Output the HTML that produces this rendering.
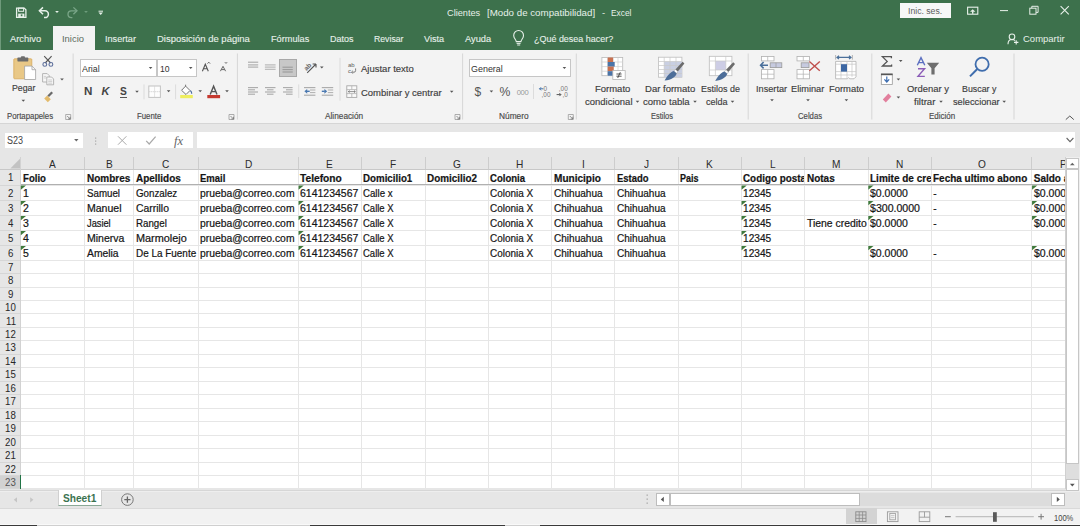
<!DOCTYPE html><html><head><meta charset="utf-8"><style>
*{margin:0;padding:0;box-sizing:border-box}
html,body{width:1080px;height:526px;overflow:hidden;background:#f3f3f3;font-family:"Liberation Sans",sans-serif;position:relative}
.p{position:absolute}
.t{position:absolute;white-space:nowrap;line-height:1}
svg{position:absolute;left:0;top:0;overflow:visible}
</style></head><body>
<div class="p" style="left:0px;top:0px;width:1080px;height:50px;background:#3d714c;"></div>
<div class="p" style="left:0px;top:0px;width:1px;height:50px;background:#6f9a7b;"></div>
<div class="t" style="left:447.40px;top:8.02px;font-size:9.9px;color:#e6f0e9;transform:scaleX(0.931);transform-origin:0 0;">Clientes</div>
<div class="t" style="left:487.20px;top:8.02px;font-size:9.9px;color:#e6f0e9;transform:scaleX(0.985);transform-origin:0 0;">[Modo de compatibilidad]</div>
<div class="t" style="left:602.00px;top:8.02px;font-size:9.4px;color:#e6f0e9;">-</div>
<div class="t" style="left:611.30px;top:8.02px;font-size:9.9px;color:#e6f0e9;transform:scaleX(0.843);transform-origin:0 0;">Excel</div>
<div class="t" style="left:10.00px;top:35.02px;font-size:9.2px;color:#e6f0e9;transform:scaleX(1.020);transform-origin:0 0;-webkit-text-stroke:0.12px #e6f0e9">Archivo</div>
<div class="t" style="left:105.30px;top:35.02px;font-size:9.2px;color:#e6f0e9;transform:scaleX(0.994);transform-origin:0 0;-webkit-text-stroke:0.12px #e6f0e9">Insertar</div>
<div class="t" style="left:157.00px;top:35.02px;font-size:9.2px;color:#e6f0e9;transform:scaleX(1.033);transform-origin:0 0;-webkit-text-stroke:0.12px #e6f0e9">Disposición de página</div>
<div class="t" style="left:270.50px;top:35.02px;font-size:9.2px;color:#e6f0e9;transform:scaleX(0.998);transform-origin:0 0;-webkit-text-stroke:0.12px #e6f0e9">Fórmulas</div>
<div class="t" style="left:329.50px;top:35.02px;font-size:9.2px;color:#e6f0e9;transform:scaleX(0.978);transform-origin:0 0;-webkit-text-stroke:0.12px #e6f0e9">Datos</div>
<div class="t" style="left:373.75px;top:35.02px;font-size:9.2px;color:#e6f0e9;transform:scaleX(0.946);transform-origin:0 0;-webkit-text-stroke:0.12px #e6f0e9">Revisar</div>
<div class="t" style="left:423.75px;top:35.02px;font-size:9.2px;color:#e6f0e9;transform:scaleX(0.986);transform-origin:0 0;-webkit-text-stroke:0.12px #e6f0e9">Vista</div>
<div class="t" style="left:464.50px;top:35.02px;font-size:9.2px;color:#e6f0e9;transform:scaleX(1.013);transform-origin:0 0;-webkit-text-stroke:0.12px #e6f0e9">Ayuda</div>
<div class="t" style="left:533.75px;top:35.02px;font-size:9.2px;color:#e6f0e9;transform:scaleX(0.975);transform-origin:0 0;-webkit-text-stroke:0.12px #e6f0e9">¿Qué desea hacer?</div>
<div class="p" style="left:53px;top:26px;width:42px;height:25px;background:#f3f3f3;"></div>
<div class="t" style="left:62.20px;top:35.02px;font-size:9.2px;color:#5b6b60;transform:scaleX(1.024);transform-origin:0 0;">Inicio</div>
<div class="p" style="left:899.5px;top:3px;width:51px;height:14.5px;background:#f7f7f7;"></div>
<div class="t" style="left:907.80px;top:7.02px;font-size:9.2px;color:#5c5c5c;transform:scaleX(0.942);transform-origin:0 0;">Inic. ses.</div>
<div class="t" style="left:1022.60px;top:35.02px;font-size:9.2px;color:#e6f0e9;transform:scaleX(1.033);transform-origin:0 0;">Compartir</div>
<div class="t" style="left:11.60px;top:83.02px;font-size:9.8px;color:#3c3c3c;transform:scaleX(0.895);transform-origin:0 0;-webkit-text-stroke:0.15px #3c3c3c">Pegar</div>
<div class="t" style="left:360.70px;top:64.02px;font-size:9.8px;color:#3c3c3c;transform:scaleX(0.969);transform-origin:0 0;-webkit-text-stroke:0.15px #3c3c3c">Ajustar texto</div>
<div class="t" style="left:360.70px;top:88.02px;font-size:9.8px;color:#3c3c3c;transform:scaleX(0.967);transform-origin:0 0;-webkit-text-stroke:0.15px #3c3c3c">Combinar y centrar</div>
<div class="t" style="left:594.70px;top:84.02px;font-size:9.8px;color:#3c3c3c;transform:scaleX(0.968);transform-origin:0 0;-webkit-text-stroke:0.15px #3c3c3c">Formato</div>
<div class="t" style="left:585.00px;top:97.02px;font-size:9.8px;color:#3c3c3c;transform:scaleX(0.969);transform-origin:0 0;-webkit-text-stroke:0.15px #3c3c3c">condicional</div>
<div class="t" style="left:645.00px;top:84.02px;font-size:9.8px;color:#3c3c3c;transform:scaleX(0.972);transform-origin:0 0;-webkit-text-stroke:0.15px #3c3c3c">Dar formato</div>
<div class="t" style="left:643.30px;top:97.02px;font-size:9.8px;color:#3c3c3c;transform:scaleX(0.974);transform-origin:0 0;-webkit-text-stroke:0.15px #3c3c3c">como tabla</div>
<div class="t" style="left:700.80px;top:84.02px;font-size:9.8px;color:#3c3c3c;transform:scaleX(0.916);transform-origin:0 0;-webkit-text-stroke:0.15px #3c3c3c">Estilos de</div>
<div class="t" style="left:706.30px;top:97.02px;font-size:9.8px;color:#3c3c3c;transform:scaleX(0.922);transform-origin:0 0;-webkit-text-stroke:0.15px #3c3c3c">celda</div>
<div class="t" style="left:756.40px;top:84.02px;font-size:9.8px;color:#3c3c3c;transform:scaleX(0.936);transform-origin:0 0;-webkit-text-stroke:0.15px #3c3c3c">Insertar</div>
<div class="t" style="left:791.40px;top:84.02px;font-size:9.8px;color:#3c3c3c;transform:scaleX(0.941);transform-origin:0 0;-webkit-text-stroke:0.15px #3c3c3c">Eliminar</div>
<div class="t" style="left:828.60px;top:84.02px;font-size:9.8px;color:#3c3c3c;transform:scaleX(0.959);transform-origin:0 0;-webkit-text-stroke:0.15px #3c3c3c">Formato</div>
<div class="t" style="left:907.40px;top:84.02px;font-size:9.8px;color:#3c3c3c;transform:scaleX(0.964);transform-origin:0 0;-webkit-text-stroke:0.15px #3c3c3c">Ordenar y</div>
<div class="t" style="left:913.80px;top:97.02px;font-size:9.8px;color:#3c3c3c;transform:scaleX(0.983);transform-origin:0 0;-webkit-text-stroke:0.15px #3c3c3c">filtrar</div>
<div class="t" style="left:962.40px;top:84.02px;font-size:9.8px;color:#3c3c3c;transform:scaleX(0.902);transform-origin:0 0;-webkit-text-stroke:0.15px #3c3c3c">Buscar y</div>
<div class="t" style="left:952.70px;top:97.02px;font-size:9.8px;color:#3c3c3c;transform:scaleX(0.942);transform-origin:0 0;-webkit-text-stroke:0.15px #3c3c3c">seleccionar</div>
<div class="t" style="left:6.90px;top:113.02px;font-size:8.2px;color:#4a4a4a;transform:scaleX(0.956);transform-origin:0 0;-webkit-text-stroke:0.15px #4a4a4a">Portapapeles</div>
<div class="t" style="left:137.00px;top:113.02px;font-size:8.2px;color:#4a4a4a;transform:scaleX(0.952);transform-origin:0 0;-webkit-text-stroke:0.15px #4a4a4a">Fuente</div>
<div class="t" style="left:324.80px;top:113.02px;font-size:8.2px;color:#4a4a4a;transform:scaleX(1.010);transform-origin:0 0;-webkit-text-stroke:0.15px #4a4a4a">Alineación</div>
<div class="t" style="left:498.50px;top:113.02px;font-size:8.2px;color:#4a4a4a;transform:scaleX(1.018);transform-origin:0 0;-webkit-text-stroke:0.15px #4a4a4a">Número</div>
<div class="t" style="left:651.30px;top:113.02px;font-size:8.2px;color:#4a4a4a;transform:scaleX(0.911);transform-origin:0 0;-webkit-text-stroke:0.15px #4a4a4a">Estilos</div>
<div class="t" style="left:797.60px;top:113.02px;font-size:8.2px;color:#4a4a4a;transform:scaleX(0.944);transform-origin:0 0;-webkit-text-stroke:0.15px #4a4a4a">Celdas</div>
<div class="t" style="left:929.30px;top:113.02px;font-size:8.2px;color:#4a4a4a;transform:scaleX(0.978);transform-origin:0 0;-webkit-text-stroke:0.15px #4a4a4a">Edición</div>
<div class="p" style="left:80.3px;top:59.3px;width:76.5px;height:17.5px;background:#fff;border:1px solid #c6c6c6"></div>
<div class="p" style="left:157px;top:59.3px;width:39.5px;height:17.5px;background:#fff;border:1px solid #c6c6c6"></div>
<div class="t" style="left:82.30px;top:65.02px;font-size:9px;color:#333;transform:scaleX(0.983);transform-origin:0 0;">Arial</div>
<div class="t" style="left:159.70px;top:65.02px;font-size:9px;color:#333;transform:scaleX(0.959);transform-origin:0 0;">10</div>
<div class="p" style="left:469.3px;top:58.8px;width:101.3px;height:18px;background:#fff;border:1px solid #c6c6c6"></div>
<div class="t" style="left:471.40px;top:65.02px;font-size:9px;color:#333;transform:scaleX(0.993);transform-origin:0 0;">General</div>
<div class="p" style="left:279px;top:58.8px;width:17.6px;height:18px;background:#c8c8c8;border:1px solid #a8a8a8"></div>
<div class="t" style="left:84.00px;top:86.02px;font-size:11px;color:#444;font-weight:bold;transform:scaleX(1.057);transform-origin:0 0;">N</div>
<div class="t" style="left:101.4px;top:86.1px;font-size:11px;color:#444;font-weight:bold;font-style:italic">K</div>
<div class="t" style="left:119.90px;top:86.02px;font-size:11px;color:#444;font-weight:bold;transform:scaleX(0.927);transform-origin:0 0;">S</div>
<div class="p" style="left:120px;top:96.6px;width:6.6px;height:0.9px;background:#555;"></div>
<div class="p" style="left:0px;top:123px;width:1080px;height:1px;background:#d5d5d5;"></div>
<div class="p" style="left:0px;top:124px;width:1080px;height:33px;background:#e6e6e6;"></div>
<div class="p" style="left:4.8px;top:132.5px;width:78.2px;height:15.5px;background:#fff;"></div>
<div class="t" style="left:7.00px;top:136.02px;font-size:10px;color:#444;transform:scaleX(0.899);transform-origin:0 0;">S23</div>
<div class="p" style="left:107.7px;top:132.3px;width:85.3px;height:15.6px;background:#fff;"></div>
<div class="p" style="left:196.6px;top:132.2px;width:878.6px;height:15.6px;background:#fff;"></div>
<div class="p" style="left:0px;top:157px;width:1066px;height:12.5px;background:#e6e6e6;"></div>
<div class="p" style="left:0px;top:169.5px;width:20.5px;height:320px;background:#e6e6e6;"></div>
<div class="p" style="left:20.5px;top:169.5px;width:1045.5px;height:319.5px;background:#fff;"></div>
<div class="p" style="left:20.5px;top:184.5px;width:1045.5px;height:1px;background:#e6e6e6;"></div>
<div class="p" style="left:0px;top:184.5px;width:20.5px;height:1px;background:#d6d6d6;"></div>
<div class="p" style="left:20.5px;top:200px;width:1045.5px;height:1px;background:#e6e6e6;"></div>
<div class="p" style="left:0px;top:200px;width:20.5px;height:1px;background:#d6d6d6;"></div>
<div class="p" style="left:20.5px;top:215px;width:1045.5px;height:1px;background:#e6e6e6;"></div>
<div class="p" style="left:0px;top:215px;width:20.5px;height:1px;background:#d6d6d6;"></div>
<div class="p" style="left:20.5px;top:230px;width:1045.5px;height:1px;background:#e6e6e6;"></div>
<div class="p" style="left:0px;top:230px;width:20.5px;height:1px;background:#d6d6d6;"></div>
<div class="p" style="left:20.5px;top:245px;width:1045.5px;height:1px;background:#e6e6e6;"></div>
<div class="p" style="left:0px;top:245px;width:20.5px;height:1px;background:#d6d6d6;"></div>
<div class="p" style="left:20.5px;top:259.6px;width:1045.5px;height:1px;background:#e6e6e6;"></div>
<div class="p" style="left:0px;top:259.6px;width:20.5px;height:1px;background:#d6d6d6;"></div>
<div class="p" style="left:20.5px;top:273.06px;width:1045.5px;height:1px;background:#e6e6e6;"></div>
<div class="p" style="left:0px;top:273.06px;width:20.5px;height:1px;background:#d6d6d6;"></div>
<div class="p" style="left:20.5px;top:286.52px;width:1045.5px;height:1px;background:#e6e6e6;"></div>
<div class="p" style="left:0px;top:286.52px;width:20.5px;height:1px;background:#d6d6d6;"></div>
<div class="p" style="left:20.5px;top:299.98px;width:1045.5px;height:1px;background:#e6e6e6;"></div>
<div class="p" style="left:0px;top:299.98px;width:20.5px;height:1px;background:#d6d6d6;"></div>
<div class="p" style="left:20.5px;top:313.44px;width:1045.5px;height:1px;background:#e6e6e6;"></div>
<div class="p" style="left:0px;top:313.44px;width:20.5px;height:1px;background:#d6d6d6;"></div>
<div class="p" style="left:20.5px;top:326.9px;width:1045.5px;height:1px;background:#e6e6e6;"></div>
<div class="p" style="left:0px;top:326.9px;width:20.5px;height:1px;background:#d6d6d6;"></div>
<div class="p" style="left:20.5px;top:340.36px;width:1045.5px;height:1px;background:#e6e6e6;"></div>
<div class="p" style="left:0px;top:340.36px;width:20.5px;height:1px;background:#d6d6d6;"></div>
<div class="p" style="left:20.5px;top:353.82px;width:1045.5px;height:1px;background:#e6e6e6;"></div>
<div class="p" style="left:0px;top:353.82px;width:20.5px;height:1px;background:#d6d6d6;"></div>
<div class="p" style="left:20.5px;top:367.28px;width:1045.5px;height:1px;background:#e6e6e6;"></div>
<div class="p" style="left:0px;top:367.28px;width:20.5px;height:1px;background:#d6d6d6;"></div>
<div class="p" style="left:20.5px;top:380.74px;width:1045.5px;height:1px;background:#e6e6e6;"></div>
<div class="p" style="left:0px;top:380.74px;width:20.5px;height:1px;background:#d6d6d6;"></div>
<div class="p" style="left:20.5px;top:394.2px;width:1045.5px;height:1px;background:#e6e6e6;"></div>
<div class="p" style="left:0px;top:394.2px;width:20.5px;height:1px;background:#d6d6d6;"></div>
<div class="p" style="left:20.5px;top:407.66px;width:1045.5px;height:1px;background:#e6e6e6;"></div>
<div class="p" style="left:0px;top:407.66px;width:20.5px;height:1px;background:#d6d6d6;"></div>
<div class="p" style="left:20.5px;top:421.12px;width:1045.5px;height:1px;background:#e6e6e6;"></div>
<div class="p" style="left:0px;top:421.12px;width:20.5px;height:1px;background:#d6d6d6;"></div>
<div class="p" style="left:20.5px;top:434.58px;width:1045.5px;height:1px;background:#e6e6e6;"></div>
<div class="p" style="left:0px;top:434.58px;width:20.5px;height:1px;background:#d6d6d6;"></div>
<div class="p" style="left:20.5px;top:448.04px;width:1045.5px;height:1px;background:#e6e6e6;"></div>
<div class="p" style="left:0px;top:448.04px;width:20.5px;height:1px;background:#d6d6d6;"></div>
<div class="p" style="left:20.5px;top:461.5px;width:1045.5px;height:1px;background:#e6e6e6;"></div>
<div class="p" style="left:0px;top:461.5px;width:20.5px;height:1px;background:#d6d6d6;"></div>
<div class="p" style="left:20.5px;top:474.96px;width:1045.5px;height:1px;background:#e6e6e6;"></div>
<div class="p" style="left:0px;top:474.96px;width:20.5px;height:1px;background:#d6d6d6;"></div>
<div class="p" style="left:20.5px;top:488.42px;width:1045.5px;height:1px;background:#e6e6e6;"></div>
<div class="p" style="left:0px;top:488.42px;width:20.5px;height:1px;background:#d6d6d6;"></div>
<div class="p" style="left:20.0px;top:157px;width:1px;height:332px;background:#e6e6e6;"></div>
<div class="p" style="left:84.0px;top:157px;width:1px;height:332px;background:#e6e6e6;"></div>
<div class="p" style="left:133.25px;top:157px;width:1px;height:332px;background:#e6e6e6;"></div>
<div class="p" style="left:197.75px;top:157px;width:1px;height:332px;background:#e6e6e6;"></div>
<div class="p" style="left:297.75px;top:157px;width:1px;height:332px;background:#e6e6e6;"></div>
<div class="p" style="left:360.75px;top:157px;width:1px;height:332px;background:#e6e6e6;"></div>
<div class="p" style="left:424.5px;top:157px;width:1px;height:332px;background:#e6e6e6;"></div>
<div class="p" style="left:487.75px;top:157px;width:1px;height:332px;background:#e6e6e6;"></div>
<div class="p" style="left:551.25px;top:157px;width:1px;height:332px;background:#e6e6e6;"></div>
<div class="p" style="left:614.0px;top:157px;width:1px;height:332px;background:#e6e6e6;"></div>
<div class="p" style="left:677.5px;top:157px;width:1px;height:332px;background:#e6e6e6;"></div>
<div class="p" style="left:740.75px;top:157px;width:1px;height:332px;background:#e6e6e6;"></div>
<div class="p" style="left:804.0px;top:157px;width:1px;height:332px;background:#e6e6e6;"></div>
<div class="p" style="left:867.5px;top:157px;width:1px;height:332px;background:#e6e6e6;"></div>
<div class="p" style="left:930.75px;top:157px;width:1px;height:332px;background:#e6e6e6;"></div>
<div class="p" style="left:1031.25px;top:157px;width:1px;height:332px;background:#e6e6e6;"></div>
<div class="p" style="left:84.0px;top:157px;width:1px;height:12.5px;background:#cdcdcd;"></div>
<div class="p" style="left:133.25px;top:157px;width:1px;height:12.5px;background:#cdcdcd;"></div>
<div class="p" style="left:197.75px;top:157px;width:1px;height:12.5px;background:#cdcdcd;"></div>
<div class="p" style="left:297.75px;top:157px;width:1px;height:12.5px;background:#cdcdcd;"></div>
<div class="p" style="left:360.75px;top:157px;width:1px;height:12.5px;background:#cdcdcd;"></div>
<div class="p" style="left:424.5px;top:157px;width:1px;height:12.5px;background:#cdcdcd;"></div>
<div class="p" style="left:487.75px;top:157px;width:1px;height:12.5px;background:#cdcdcd;"></div>
<div class="p" style="left:551.25px;top:157px;width:1px;height:12.5px;background:#cdcdcd;"></div>
<div class="p" style="left:614.0px;top:157px;width:1px;height:12.5px;background:#cdcdcd;"></div>
<div class="p" style="left:677.5px;top:157px;width:1px;height:12.5px;background:#cdcdcd;"></div>
<div class="p" style="left:740.75px;top:157px;width:1px;height:12.5px;background:#cdcdcd;"></div>
<div class="p" style="left:804.0px;top:157px;width:1px;height:12.5px;background:#cdcdcd;"></div>
<div class="p" style="left:867.5px;top:157px;width:1px;height:12.5px;background:#cdcdcd;"></div>
<div class="p" style="left:930.75px;top:157px;width:1px;height:12.5px;background:#cdcdcd;"></div>
<div class="p" style="left:1031.25px;top:157px;width:1px;height:12.5px;background:#cdcdcd;"></div>
<div class="p" style="left:0px;top:169px;width:1066px;height:1px;background:#c8c8c8;"></div>
<div class="p" style="left:20px;top:157px;width:1px;height:332px;background:#d2d2d2;"></div>
<div class="p" style="left:20.5px;top:184px;width:1045.5px;height:1.2px;background:#b0b0b0;"></div>
<div class="p" style="left:0px;top:475.96000000000004px;width:20px;height:12.460000000000036px;background:#d2d2d2;"></div>
<div class="p" style="left:19.6px;top:475.46000000000004px;width:1.6px;height:13.460000000000036px;background:#217346;"></div>
<div class="t" style="left:49.12px;top:159.02px;font-size:11px;color:#2b2b2b;transform:scaleX(0.920);transform-origin:0 0;">A</div>
<div class="t" style="left:105.75px;top:159.02px;font-size:11px;color:#2b2b2b;transform:scaleX(0.920);transform-origin:0 0;">B</div>
<div class="t" style="left:162.35px;top:159.02px;font-size:11px;color:#2b2b2b;transform:scaleX(0.920);transform-origin:0 0;">C</div>
<div class="t" style="left:244.60px;top:159.02px;font-size:11px;color:#2b2b2b;transform:scaleX(0.920);transform-origin:0 0;">D</div>
<div class="t" style="left:326.37px;top:159.02px;font-size:11px;color:#2b2b2b;transform:scaleX(0.920);transform-origin:0 0;">E</div>
<div class="t" style="left:390.03px;top:159.02px;font-size:11px;color:#2b2b2b;transform:scaleX(0.920);transform-origin:0 0;">F</div>
<div class="t" style="left:452.69px;top:159.02px;font-size:11px;color:#2b2b2b;transform:scaleX(0.920);transform-origin:0 0;">G</div>
<div class="t" style="left:516.35px;top:159.02px;font-size:11px;color:#2b2b2b;transform:scaleX(0.920);transform-origin:0 0;">H</div>
<div class="t" style="left:581.72px;top:159.02px;font-size:11px;color:#2b2b2b;transform:scaleX(0.920);transform-origin:0 0;">I</div>
<div class="t" style="left:643.72px;top:159.02px;font-size:11px;color:#2b2b2b;transform:scaleX(0.920);transform-origin:0 0;">J</div>
<div class="t" style="left:706.25px;top:159.02px;font-size:11px;color:#2b2b2b;transform:scaleX(0.920);transform-origin:0 0;">K</div>
<div class="t" style="left:770.06px;top:159.02px;font-size:11px;color:#2b2b2b;transform:scaleX(0.920);transform-origin:0 0;">L</div>
<div class="t" style="left:832.04px;top:159.02px;font-size:11px;color:#2b2b2b;transform:scaleX(0.920);transform-origin:0 0;">M</div>
<div class="t" style="left:895.97px;top:159.02px;font-size:11px;color:#2b2b2b;transform:scaleX(0.920);transform-origin:0 0;">N</div>
<div class="t" style="left:977.56px;top:159.02px;font-size:11px;color:#2b2b2b;transform:scaleX(0.920);transform-origin:0 0;">O</div>
<div class="t" style="left:1060.00px;top:159.02px;font-size:11px;color:#2b2b2b;transform:scaleX(0.920);transform-origin:0 0;">P</div>
<div class="t" style="left:8.11px;top:172.02px;font-size:11px;color:#262626;transform:scaleX(0.880);transform-origin:0 0;">1</div>
<div class="t" style="left:8.11px;top:188.02px;font-size:11px;color:#262626;transform:scaleX(0.880);transform-origin:0 0;">2</div>
<div class="t" style="left:8.11px;top:203.02px;font-size:11px;color:#262626;transform:scaleX(0.880);transform-origin:0 0;">3</div>
<div class="t" style="left:8.11px;top:218.02px;font-size:11px;color:#262626;transform:scaleX(0.880);transform-origin:0 0;">4</div>
<div class="t" style="left:8.11px;top:233.02px;font-size:11px;color:#262626;transform:scaleX(0.880);transform-origin:0 0;">5</div>
<div class="t" style="left:8.11px;top:248.02px;font-size:11px;color:#262626;transform:scaleX(0.880);transform-origin:0 0;">6</div>
<div class="t" style="left:8.11px;top:262.02px;font-size:11px;color:#262626;transform:scaleX(0.880);transform-origin:0 0;">7</div>
<div class="t" style="left:8.11px;top:275.02px;font-size:11px;color:#262626;transform:scaleX(0.880);transform-origin:0 0;">8</div>
<div class="t" style="left:8.11px;top:289.02px;font-size:11px;color:#262626;transform:scaleX(0.880);transform-origin:0 0;">9</div>
<div class="t" style="left:5.42px;top:302.02px;font-size:11px;color:#262626;transform:scaleX(0.880);transform-origin:0 0;">10</div>
<div class="t" style="left:5.78px;top:316.02px;font-size:11px;color:#262626;transform:scaleX(0.880);transform-origin:0 0;">11</div>
<div class="t" style="left:5.42px;top:329.02px;font-size:11px;color:#262626;transform:scaleX(0.880);transform-origin:0 0;">12</div>
<div class="t" style="left:5.42px;top:342.02px;font-size:11px;color:#262626;transform:scaleX(0.880);transform-origin:0 0;">13</div>
<div class="t" style="left:5.42px;top:356.02px;font-size:11px;color:#262626;transform:scaleX(0.880);transform-origin:0 0;">14</div>
<div class="t" style="left:5.42px;top:369.02px;font-size:11px;color:#262626;transform:scaleX(0.880);transform-origin:0 0;">15</div>
<div class="t" style="left:5.42px;top:383.02px;font-size:11px;color:#262626;transform:scaleX(0.880);transform-origin:0 0;">16</div>
<div class="t" style="left:5.42px;top:396.02px;font-size:11px;color:#262626;transform:scaleX(0.880);transform-origin:0 0;">17</div>
<div class="t" style="left:5.42px;top:410.02px;font-size:11px;color:#262626;transform:scaleX(0.880);transform-origin:0 0;">18</div>
<div class="t" style="left:5.42px;top:423.02px;font-size:11px;color:#262626;transform:scaleX(0.880);transform-origin:0 0;">19</div>
<div class="t" style="left:5.42px;top:437.02px;font-size:11px;color:#262626;transform:scaleX(0.880);transform-origin:0 0;">20</div>
<div class="t" style="left:5.42px;top:450.02px;font-size:11px;color:#262626;transform:scaleX(0.880);transform-origin:0 0;">21</div>
<div class="t" style="left:5.42px;top:464.02px;font-size:11px;color:#262626;transform:scaleX(0.880);transform-origin:0 0;">22</div>
<div class="t" style="left:5.42px;top:477.02px;font-size:11px;color:#555;transform:scaleX(0.880);transform-origin:0 0;">23</div>
<div class="p" style="left:21.00px;top:169.50px;width:63.00px;height:15px;overflow:hidden"><div class="t" style="left:1.5px;top:4.52px;font-size:10px;color:#151515;font-weight:bold;transform:scaleX(0.962);transform-origin:0 0;-webkit-text-stroke:0.2px #151515">Folio</div></div>
<div class="p" style="left:85.00px;top:169.50px;width:48.25px;height:15px;overflow:hidden"><div class="t" style="left:1.5px;top:4.52px;font-size:10px;color:#151515;font-weight:bold;transform:scaleX(0.998);transform-origin:0 0;-webkit-text-stroke:0.2px #151515">Nombres</div></div>
<div class="p" style="left:134.25px;top:169.50px;width:63.50px;height:15px;overflow:hidden"><div class="t" style="left:1.5px;top:4.52px;font-size:10px;color:#151515;font-weight:bold;transform:scaleX(0.996);transform-origin:0 0;-webkit-text-stroke:0.2px #151515">Apellidos</div></div>
<div class="p" style="left:198.75px;top:169.50px;width:99.00px;height:15px;overflow:hidden"><div class="t" style="left:1.5px;top:4.52px;font-size:10px;color:#151515;font-weight:bold;transform:scaleX(0.951);transform-origin:0 0;-webkit-text-stroke:0.2px #151515">Email</div></div>
<div class="p" style="left:298.75px;top:169.50px;width:62.00px;height:15px;overflow:hidden"><div class="t" style="left:1.5px;top:4.52px;font-size:10px;color:#151515;font-weight:bold;transform:scaleX(1.02);transform-origin:0 0;-webkit-text-stroke:0.2px #151515">Telefono</div></div>
<div class="p" style="left:361.75px;top:169.50px;width:62.75px;height:15px;overflow:hidden"><div class="t" style="left:1.5px;top:4.52px;font-size:10px;color:#151515;font-weight:bold;transform:scaleX(0.974);transform-origin:0 0;-webkit-text-stroke:0.2px #151515">Domicilio1</div></div>
<div class="p" style="left:425.50px;top:169.50px;width:62.25px;height:15px;overflow:hidden"><div class="t" style="left:1.5px;top:4.52px;font-size:10px;color:#151515;font-weight:bold;transform:scaleX(0.988);transform-origin:0 0;-webkit-text-stroke:0.2px #151515">Domicilio2</div></div>
<div class="p" style="left:488.75px;top:169.50px;width:62.50px;height:15px;overflow:hidden"><div class="t" style="left:1.5px;top:4.52px;font-size:10px;color:#151515;font-weight:bold;transform:scaleX(0.957);transform-origin:0 0;-webkit-text-stroke:0.2px #151515">Colonia</div></div>
<div class="p" style="left:552.25px;top:169.50px;width:61.75px;height:15px;overflow:hidden"><div class="t" style="left:1.5px;top:4.52px;font-size:10px;color:#151515;font-weight:bold;transform:scaleX(1.006);transform-origin:0 0;-webkit-text-stroke:0.2px #151515">Municipio</div></div>
<div class="p" style="left:615.00px;top:169.50px;width:62.50px;height:15px;overflow:hidden"><div class="t" style="left:1.5px;top:4.52px;font-size:10px;color:#151515;font-weight:bold;transform:scaleX(0.946);transform-origin:0 0;-webkit-text-stroke:0.2px #151515">Estado</div></div>
<div class="p" style="left:678.50px;top:169.50px;width:62.25px;height:15px;overflow:hidden"><div class="t" style="left:1.5px;top:4.52px;font-size:10px;color:#151515;font-weight:bold;transform:scaleX(0.898);transform-origin:0 0;-webkit-text-stroke:0.2px #151515">Pais</div></div>
<div class="p" style="left:741.75px;top:169.50px;width:62.25px;height:15px;overflow:hidden"><div class="t" style="left:1.5px;top:4.52px;font-size:10px;color:#151515;font-weight:bold;transform:scaleX(0.985);transform-origin:0 0;-webkit-text-stroke:0.2px #151515">Codigo postal</div></div>
<div class="p" style="left:805.00px;top:169.50px;width:62.50px;height:15px;overflow:hidden"><div class="t" style="left:1.5px;top:4.52px;font-size:10px;color:#151515;font-weight:bold;transform:scaleX(0.996);transform-origin:0 0;-webkit-text-stroke:0.2px #151515">Notas</div></div>
<div class="p" style="left:868.50px;top:169.50px;width:62.25px;height:15px;overflow:hidden"><div class="t" style="left:1.5px;top:4.52px;font-size:10px;color:#151515;font-weight:bold;transform:scaleX(1.0);transform-origin:0 0;-webkit-text-stroke:0.2px #151515">Limite de credito</div></div>
<div class="p" style="left:931.75px;top:169.50px;width:99.50px;height:15px;overflow:hidden"><div class="t" style="left:1.5px;top:4.52px;font-size:10px;color:#151515;font-weight:bold;transform:scaleX(0.998);transform-origin:0 0;-webkit-text-stroke:0.2px #151515">Fecha ultimo abono</div></div>
<div class="p" style="left:1032.25px;top:169.50px;width:32.25px;height:15px;overflow:hidden"><div class="t" style="left:1.5px;top:4.52px;font-size:10px;color:#151515;font-weight:bold;transform:scaleX(1.0);transform-origin:0 0;-webkit-text-stroke:0.2px #151515">Saldo actual</div></div>
<div class="p" style="left:21.00px;top:184.50px;width:63.00px;height:15px;overflow:hidden"><div class="t" style="left:1.5px;top:4.52px;font-size:10px;color:#151515;transform:scaleX(1.05);transform-origin:0 0;-webkit-text-stroke:0.2px #151515">1</div></div>
<div class="p" style="left:85.00px;top:184.50px;width:48.25px;height:15px;overflow:hidden"><div class="t" style="left:1.5px;top:4.52px;font-size:10px;color:#151515;transform:scaleX(0.973);transform-origin:0 0;-webkit-text-stroke:0.2px #151515">Samuel</div></div>
<div class="p" style="left:134.25px;top:184.50px;width:63.50px;height:15px;overflow:hidden"><div class="t" style="left:1.5px;top:4.52px;font-size:10px;color:#151515;transform:scaleX(0.976);transform-origin:0 0;-webkit-text-stroke:0.2px #151515">Gonzalez</div></div>
<div class="p" style="left:198.75px;top:184.50px;width:99.00px;height:15px;overflow:hidden"><div class="t" style="left:1.5px;top:4.52px;font-size:10px;color:#151515;transform:scaleX(1.035);transform-origin:0 0;-webkit-text-stroke:0.2px #151515">prueba@correo.com</div></div>
<div class="p" style="left:298.75px;top:184.50px;width:62.00px;height:15px;overflow:hidden"><div class="t" style="left:1.5px;top:4.52px;font-size:10px;color:#151515;transform:scaleX(1.049);transform-origin:0 0;-webkit-text-stroke:0.2px #151515">6141234567</div></div>
<div class="p" style="left:361.75px;top:184.50px;width:62.75px;height:15px;overflow:hidden"><div class="t" style="left:1.5px;top:4.52px;font-size:10px;color:#151515;transform:scaleX(0.967);transform-origin:0 0;-webkit-text-stroke:0.2px #151515">Calle x</div></div>
<div class="p" style="left:488.75px;top:184.50px;width:62.50px;height:15px;overflow:hidden"><div class="t" style="left:1.5px;top:4.52px;font-size:10px;color:#151515;transform:scaleX(0.995);transform-origin:0 0;-webkit-text-stroke:0.2px #151515">Colonia X</div></div>
<div class="p" style="left:552.25px;top:184.50px;width:61.75px;height:15px;overflow:hidden"><div class="t" style="left:1.5px;top:4.52px;font-size:10px;color:#151515;transform:scaleX(1.004);transform-origin:0 0;-webkit-text-stroke:0.2px #151515">Chihuahua</div></div>
<div class="p" style="left:615.00px;top:184.50px;width:62.50px;height:15px;overflow:hidden"><div class="t" style="left:1.5px;top:4.52px;font-size:10px;color:#151515;transform:scaleX(1.004);transform-origin:0 0;-webkit-text-stroke:0.2px #151515">Chihuahua</div></div>
<div class="p" style="left:741.75px;top:184.50px;width:62.25px;height:15px;overflow:hidden"><div class="t" style="left:1.5px;top:4.52px;font-size:10px;color:#151515;transform:scaleX(1.014);transform-origin:0 0;-webkit-text-stroke:0.2px #151515">12345</div></div>
<div class="p" style="left:868.50px;top:184.50px;width:62.25px;height:15px;overflow:hidden"><div class="t" style="left:1.5px;top:4.52px;font-size:10px;color:#151515;transform:scaleX(1.047);transform-origin:0 0;-webkit-text-stroke:0.2px #151515">$0.0000</div></div>
<div class="p" style="left:931.75px;top:184.50px;width:99.50px;height:15px;overflow:hidden"><div class="t" style="left:1.5px;top:4.52px;font-size:10px;color:#151515;transform:scaleX(1.0);transform-origin:0 0;-webkit-text-stroke:0.2px #151515">-</div></div>
<div class="p" style="left:1032.25px;top:184.50px;width:32.25px;height:15px;overflow:hidden"><div class="t" style="left:1.5px;top:4.52px;font-size:10px;color:#151515;transform:scaleX(1.047);transform-origin:0 0;-webkit-text-stroke:0.2px #151515">$0.0000</div></div>
<div class="p" style="left:21.00px;top:200.00px;width:63.00px;height:15px;overflow:hidden"><div class="t" style="left:1.5px;top:4.02px;font-size:10px;color:#151515;transform:scaleX(1.05);transform-origin:0 0;-webkit-text-stroke:0.2px #151515">2</div></div>
<div class="p" style="left:85.00px;top:200.00px;width:48.25px;height:15px;overflow:hidden"><div class="t" style="left:1.5px;top:4.02px;font-size:10px;color:#151515;transform:scaleX(1.052);transform-origin:0 0;-webkit-text-stroke:0.2px #151515">Manuel</div></div>
<div class="p" style="left:134.25px;top:200.00px;width:63.50px;height:15px;overflow:hidden"><div class="t" style="left:1.5px;top:4.02px;font-size:10px;color:#151515;transform:scaleX(1.041);transform-origin:0 0;-webkit-text-stroke:0.2px #151515">Carrillo</div></div>
<div class="p" style="left:198.75px;top:200.00px;width:99.00px;height:15px;overflow:hidden"><div class="t" style="left:1.5px;top:4.02px;font-size:10px;color:#151515;transform:scaleX(1.035);transform-origin:0 0;-webkit-text-stroke:0.2px #151515">prueba@correo.com</div></div>
<div class="p" style="left:298.75px;top:200.00px;width:62.00px;height:15px;overflow:hidden"><div class="t" style="left:1.5px;top:4.02px;font-size:10px;color:#151515;transform:scaleX(1.049);transform-origin:0 0;-webkit-text-stroke:0.2px #151515">6141234567</div></div>
<div class="p" style="left:361.75px;top:200.00px;width:62.75px;height:15px;overflow:hidden"><div class="t" style="left:1.5px;top:4.02px;font-size:10px;color:#151515;transform:scaleX(0.95);transform-origin:0 0;-webkit-text-stroke:0.2px #151515">Calle X</div></div>
<div class="p" style="left:488.75px;top:200.00px;width:62.50px;height:15px;overflow:hidden"><div class="t" style="left:1.5px;top:4.02px;font-size:10px;color:#151515;transform:scaleX(0.995);transform-origin:0 0;-webkit-text-stroke:0.2px #151515">Colonia X</div></div>
<div class="p" style="left:552.25px;top:200.00px;width:61.75px;height:15px;overflow:hidden"><div class="t" style="left:1.5px;top:4.02px;font-size:10px;color:#151515;transform:scaleX(1.004);transform-origin:0 0;-webkit-text-stroke:0.2px #151515">Chihuahua</div></div>
<div class="p" style="left:615.00px;top:200.00px;width:62.50px;height:15px;overflow:hidden"><div class="t" style="left:1.5px;top:4.02px;font-size:10px;color:#151515;transform:scaleX(1.004);transform-origin:0 0;-webkit-text-stroke:0.2px #151515">Chihuahua</div></div>
<div class="p" style="left:741.75px;top:200.00px;width:62.25px;height:15px;overflow:hidden"><div class="t" style="left:1.5px;top:4.02px;font-size:10px;color:#151515;transform:scaleX(1.014);transform-origin:0 0;-webkit-text-stroke:0.2px #151515">12345</div></div>
<div class="p" style="left:868.50px;top:200.00px;width:62.25px;height:15px;overflow:hidden"><div class="t" style="left:1.5px;top:4.02px;font-size:10px;color:#151515;transform:scaleX(1.057);transform-origin:0 0;-webkit-text-stroke:0.2px #151515">$300.0000</div></div>
<div class="p" style="left:931.75px;top:200.00px;width:99.50px;height:15px;overflow:hidden"><div class="t" style="left:1.5px;top:4.02px;font-size:10px;color:#151515;transform:scaleX(1.0);transform-origin:0 0;-webkit-text-stroke:0.2px #151515">-</div></div>
<div class="p" style="left:1032.25px;top:200.00px;width:32.25px;height:15px;overflow:hidden"><div class="t" style="left:1.5px;top:4.02px;font-size:10px;color:#151515;transform:scaleX(1.047);transform-origin:0 0;-webkit-text-stroke:0.2px #151515">$0.0000</div></div>
<div class="p" style="left:21.00px;top:215.00px;width:63.00px;height:15px;overflow:hidden"><div class="t" style="left:1.5px;top:4.02px;font-size:10px;color:#151515;transform:scaleX(1.05);transform-origin:0 0;-webkit-text-stroke:0.2px #151515">3</div></div>
<div class="p" style="left:85.00px;top:215.00px;width:48.25px;height:15px;overflow:hidden"><div class="t" style="left:1.5px;top:4.02px;font-size:10px;color:#151515;transform:scaleX(0.926);transform-origin:0 0;-webkit-text-stroke:0.2px #151515">Jasiel</div></div>
<div class="p" style="left:134.25px;top:215.00px;width:63.50px;height:15px;overflow:hidden"><div class="t" style="left:1.5px;top:4.02px;font-size:10px;color:#151515;transform:scaleX(0.972);transform-origin:0 0;-webkit-text-stroke:0.2px #151515">Rangel</div></div>
<div class="p" style="left:198.75px;top:215.00px;width:99.00px;height:15px;overflow:hidden"><div class="t" style="left:1.5px;top:4.02px;font-size:10px;color:#151515;transform:scaleX(1.035);transform-origin:0 0;-webkit-text-stroke:0.2px #151515">prueba@correo.com</div></div>
<div class="p" style="left:298.75px;top:215.00px;width:62.00px;height:15px;overflow:hidden"><div class="t" style="left:1.5px;top:4.02px;font-size:10px;color:#151515;transform:scaleX(1.049);transform-origin:0 0;-webkit-text-stroke:0.2px #151515">6141234567</div></div>
<div class="p" style="left:361.75px;top:215.00px;width:62.75px;height:15px;overflow:hidden"><div class="t" style="left:1.5px;top:4.02px;font-size:10px;color:#151515;transform:scaleX(0.95);transform-origin:0 0;-webkit-text-stroke:0.2px #151515">Calle X</div></div>
<div class="p" style="left:488.75px;top:215.00px;width:62.50px;height:15px;overflow:hidden"><div class="t" style="left:1.5px;top:4.02px;font-size:10px;color:#151515;transform:scaleX(0.995);transform-origin:0 0;-webkit-text-stroke:0.2px #151515">Colonia X</div></div>
<div class="p" style="left:552.25px;top:215.00px;width:61.75px;height:15px;overflow:hidden"><div class="t" style="left:1.5px;top:4.02px;font-size:10px;color:#151515;transform:scaleX(1.004);transform-origin:0 0;-webkit-text-stroke:0.2px #151515">Chihuahua</div></div>
<div class="p" style="left:615.00px;top:215.00px;width:62.50px;height:15px;overflow:hidden"><div class="t" style="left:1.5px;top:4.02px;font-size:10px;color:#151515;transform:scaleX(1.004);transform-origin:0 0;-webkit-text-stroke:0.2px #151515">Chihuahua</div></div>
<div class="p" style="left:741.75px;top:215.00px;width:62.25px;height:15px;overflow:hidden"><div class="t" style="left:1.5px;top:4.02px;font-size:10px;color:#151515;transform:scaleX(1.014);transform-origin:0 0;-webkit-text-stroke:0.2px #151515">12345</div></div>
<div class="p" style="left:805.00px;top:215.00px;width:62.50px;height:15px;overflow:hidden"><div class="t" style="left:1.5px;top:4.02px;font-size:10px;color:#151515;transform:scaleX(1.04);transform-origin:0 0;-webkit-text-stroke:0.2px #151515">Tiene credito</div></div>
<div class="p" style="left:868.50px;top:215.00px;width:62.25px;height:15px;overflow:hidden"><div class="t" style="left:1.5px;top:4.02px;font-size:10px;color:#151515;transform:scaleX(1.047);transform-origin:0 0;-webkit-text-stroke:0.2px #151515">$0.0000</div></div>
<div class="p" style="left:931.75px;top:215.00px;width:99.50px;height:15px;overflow:hidden"><div class="t" style="left:1.5px;top:4.02px;font-size:10px;color:#151515;transform:scaleX(1.0);transform-origin:0 0;-webkit-text-stroke:0.2px #151515">-</div></div>
<div class="p" style="left:1032.25px;top:215.00px;width:32.25px;height:15px;overflow:hidden"><div class="t" style="left:1.5px;top:4.02px;font-size:10px;color:#151515;transform:scaleX(1.047);transform-origin:0 0;-webkit-text-stroke:0.2px #151515">$0.0000</div></div>
<div class="p" style="left:21.00px;top:230.00px;width:63.00px;height:15px;overflow:hidden"><div class="t" style="left:1.5px;top:4.02px;font-size:10px;color:#151515;transform:scaleX(1.05);transform-origin:0 0;-webkit-text-stroke:0.2px #151515">4</div></div>
<div class="p" style="left:85.00px;top:230.00px;width:48.25px;height:15px;overflow:hidden"><div class="t" style="left:1.5px;top:4.02px;font-size:10px;color:#151515;transform:scaleX(1.053);transform-origin:0 0;-webkit-text-stroke:0.2px #151515">Minerva</div></div>
<div class="p" style="left:134.25px;top:230.00px;width:63.50px;height:15px;overflow:hidden"><div class="t" style="left:1.5px;top:4.02px;font-size:10px;color:#151515;transform:scaleX(1.088);transform-origin:0 0;-webkit-text-stroke:0.2px #151515">Marmolejo</div></div>
<div class="p" style="left:198.75px;top:230.00px;width:99.00px;height:15px;overflow:hidden"><div class="t" style="left:1.5px;top:4.02px;font-size:10px;color:#151515;transform:scaleX(1.035);transform-origin:0 0;-webkit-text-stroke:0.2px #151515">prueba@correo.com</div></div>
<div class="p" style="left:298.75px;top:230.00px;width:62.00px;height:15px;overflow:hidden"><div class="t" style="left:1.5px;top:4.02px;font-size:10px;color:#151515;transform:scaleX(1.049);transform-origin:0 0;-webkit-text-stroke:0.2px #151515">6141234567</div></div>
<div class="p" style="left:361.75px;top:230.00px;width:62.75px;height:15px;overflow:hidden"><div class="t" style="left:1.5px;top:4.02px;font-size:10px;color:#151515;transform:scaleX(0.95);transform-origin:0 0;-webkit-text-stroke:0.2px #151515">Calle X</div></div>
<div class="p" style="left:488.75px;top:230.00px;width:62.50px;height:15px;overflow:hidden"><div class="t" style="left:1.5px;top:4.02px;font-size:10px;color:#151515;transform:scaleX(0.995);transform-origin:0 0;-webkit-text-stroke:0.2px #151515">Colonia X</div></div>
<div class="p" style="left:552.25px;top:230.00px;width:61.75px;height:15px;overflow:hidden"><div class="t" style="left:1.5px;top:4.02px;font-size:10px;color:#151515;transform:scaleX(1.004);transform-origin:0 0;-webkit-text-stroke:0.2px #151515">Chihuahua</div></div>
<div class="p" style="left:615.00px;top:230.00px;width:62.50px;height:15px;overflow:hidden"><div class="t" style="left:1.5px;top:4.02px;font-size:10px;color:#151515;transform:scaleX(1.004);transform-origin:0 0;-webkit-text-stroke:0.2px #151515">Chihuahua</div></div>
<div class="p" style="left:741.75px;top:230.00px;width:62.25px;height:15px;overflow:hidden"><div class="t" style="left:1.5px;top:4.02px;font-size:10px;color:#151515;transform:scaleX(1.014);transform-origin:0 0;-webkit-text-stroke:0.2px #151515">12345</div></div>
<div class="p" style="left:21.00px;top:245.00px;width:63.00px;height:15px;overflow:hidden"><div class="t" style="left:1.5px;top:4.02px;font-size:10px;color:#151515;transform:scaleX(1.05);transform-origin:0 0;-webkit-text-stroke:0.2px #151515">5</div></div>
<div class="p" style="left:85.00px;top:245.00px;width:48.25px;height:15px;overflow:hidden"><div class="t" style="left:1.5px;top:4.02px;font-size:10px;color:#151515;transform:scaleX(1.033);transform-origin:0 0;-webkit-text-stroke:0.2px #151515">Amelia</div></div>
<div class="p" style="left:134.25px;top:245.00px;width:63.50px;height:15px;overflow:hidden"><div class="t" style="left:1.5px;top:4.02px;font-size:10px;color:#151515;transform:scaleX(0.993);transform-origin:0 0;-webkit-text-stroke:0.2px #151515">De La Fuente</div></div>
<div class="p" style="left:198.75px;top:245.00px;width:99.00px;height:15px;overflow:hidden"><div class="t" style="left:1.5px;top:4.02px;font-size:10px;color:#151515;transform:scaleX(1.035);transform-origin:0 0;-webkit-text-stroke:0.2px #151515">prueba@correo.com</div></div>
<div class="p" style="left:298.75px;top:245.00px;width:62.00px;height:15px;overflow:hidden"><div class="t" style="left:1.5px;top:4.02px;font-size:10px;color:#151515;transform:scaleX(1.049);transform-origin:0 0;-webkit-text-stroke:0.2px #151515">6141234567</div></div>
<div class="p" style="left:361.75px;top:245.00px;width:62.75px;height:15px;overflow:hidden"><div class="t" style="left:1.5px;top:4.02px;font-size:10px;color:#151515;transform:scaleX(0.95);transform-origin:0 0;-webkit-text-stroke:0.2px #151515">Calle X</div></div>
<div class="p" style="left:488.75px;top:245.00px;width:62.50px;height:15px;overflow:hidden"><div class="t" style="left:1.5px;top:4.02px;font-size:10px;color:#151515;transform:scaleX(0.995);transform-origin:0 0;-webkit-text-stroke:0.2px #151515">Colonia X</div></div>
<div class="p" style="left:552.25px;top:245.00px;width:61.75px;height:15px;overflow:hidden"><div class="t" style="left:1.5px;top:4.02px;font-size:10px;color:#151515;transform:scaleX(1.004);transform-origin:0 0;-webkit-text-stroke:0.2px #151515">Chihuahua</div></div>
<div class="p" style="left:615.00px;top:245.00px;width:62.50px;height:15px;overflow:hidden"><div class="t" style="left:1.5px;top:4.02px;font-size:10px;color:#151515;transform:scaleX(1.004);transform-origin:0 0;-webkit-text-stroke:0.2px #151515">Chihuahua</div></div>
<div class="p" style="left:741.75px;top:245.00px;width:62.25px;height:15px;overflow:hidden"><div class="t" style="left:1.5px;top:4.02px;font-size:10px;color:#151515;transform:scaleX(1.014);transform-origin:0 0;-webkit-text-stroke:0.2px #151515">12345</div></div>
<div class="p" style="left:868.50px;top:245.00px;width:62.25px;height:15px;overflow:hidden"><div class="t" style="left:1.5px;top:4.02px;font-size:10px;color:#151515;transform:scaleX(1.047);transform-origin:0 0;-webkit-text-stroke:0.2px #151515">$0.0000</div></div>
<div class="p" style="left:931.75px;top:245.00px;width:99.50px;height:15px;overflow:hidden"><div class="t" style="left:1.5px;top:4.02px;font-size:10px;color:#151515;transform:scaleX(1.0);transform-origin:0 0;-webkit-text-stroke:0.2px #151515">-</div></div>
<div class="p" style="left:1032.25px;top:245.00px;width:32.25px;height:15px;overflow:hidden"><div class="t" style="left:1.5px;top:4.02px;font-size:10px;color:#151515;transform:scaleX(1.047);transform-origin:0 0;-webkit-text-stroke:0.2px #151515">$0.0000</div></div>
<div class="p" style="left:1064.5px;top:157px;width:15.5px;height:334.5px;background:#efefef;border-left:1.2px solid #d0d0d0"></div>
<div class="p" style="left:1066px;top:169px;width:12.6px;height:310px;background:#dedede;"></div>
<div class="p" style="left:1066px;top:157.6px;width:12.6px;height:11.6px;background:#fff;border:1px solid #c6c6c6"></div>
<div class="p" style="left:1066px;top:169px;width:12.6px;height:295.3px;background:#fff;border:1px solid #c6c6c6"></div>
<div class="p" style="left:1066px;top:478.6px;width:12.6px;height:12.8px;background:#fff;border:1px solid #c6c6c6"></div>
<div class="p" style="left:0px;top:489px;width:1066px;height:19.5px;background:#e6e6e6;"></div>
<div class="p" style="left:0px;top:490px;width:1066px;height:1px;background:#d6d6d6;"></div>
<div class="p" style="left:0px;top:491px;width:1066px;height:1.2px;background:#eeeeee;"></div>
<div class="p" style="left:57.5px;top:490px;width:44px;height:16.4px;background:#fff;border:1px solid #d0d0d0;border-top:none;border-bottom:1.5px solid #8aa896"></div>
<div class="t" style="left:62.50px;top:494.02px;font-size:10.2px;color:#3b7350;font-weight:bold;transform:scaleX(0.996);transform-origin:0 0;">Sheet1</div>
<div class="p" style="left:656.3px;top:493.2px;width:409px;height:12.6px;background:#dcdcdc;"></div>
<div class="p" style="left:656.3px;top:493.2px;width:13.5px;height:12.4px;background:#fff;border:1px solid #bdbdbd"></div>
<div class="p" style="left:669.5px;top:493.2px;width:190.5px;height:12.4px;background:#fff;border:1px solid #bdbdbd"></div>
<div class="p" style="left:1051.1px;top:493.2px;width:13.8px;height:12.4px;background:#fff;border:1px solid #bdbdbd"></div>
<div class="p" style="left:0px;top:508px;width:1080px;height:1px;background:#d9d9d9;"></div>
<div class="p" style="left:0px;top:509px;width:1080px;height:17px;background:#f2f2f2;"></div>
<div class="p" style="left:0px;top:524px;width:1080px;height:1px;background:#f9f9f9;"></div>
<div class="p" style="left:1064.5px;top:491.5px;width:15.5px;height:16.5px;background:#e6e6e6;"></div>
<div class="p" style="left:845.6px;top:508px;width:31.1px;height:16.4px;background:#d3d3d3;"></div>
<div class="t" style="left:1054.40px;top:514.02px;font-size:8.4px;color:#444;transform:scaleX(0.903);transform-origin:0 0;">100%</div>
<div class="p" style="left:0px;top:525px;width:37px;height:1px;background:#3a3a3a;"></div>
<div class="p" style="left:37px;top:525px;width:273px;height:1px;background:#cfcfcf;"></div>
<div class="p" style="left:310px;top:525px;width:195px;height:1px;background:#3a3a3a;"></div>
<div class="p" style="left:505px;top:525px;width:35px;height:1px;background:#cfcfcf;"></div>
<div class="p" style="left:540px;top:525px;width:540px;height:1px;background:#3a3a3a;"></div>
<svg width="1080" height="526" viewBox="0 0 1080 526"><path d="M16.6 8.1h7.6l1.7 1.7v7.6h-9.3z" fill="none" stroke="#e8f1ea" stroke-width="1.3"/><rect x="18.6" y="8.1" width="5" height="3.2" fill="none" stroke="#e8f1ea" stroke-width="1"/><rect x="18.2" y="13.6" width="6.2" height="3.6" fill="#e8f1ea"/><rect x="20.8" y="14.4" width="1.6" height="1.8" fill="#3d714c"/><path d="M39.8 10.8h5.2a3.4 3.4 0 0 1 0 6.8h-1" fill="none" stroke="#e8f1ea" stroke-width="1.5"/><path d="M43 7.4L39.4 10.8L43 14.2" fill="none" stroke="#e8f1ea" stroke-width="1.5"/><path d="M55.10 11.00h3.8l-1.9 2z" fill="#e8f1ea"/><path d="M76.6 10.8h-5.2a3.4 3.4 0 0 0 0 6.8h1" fill="none" stroke="#7aa688" stroke-width="1.3"/><path d="M73.4 7.4L77 10.8L73.4 14.2" fill="none" stroke="#7aa688" stroke-width="1.3"/><path d="M84.10 11.00h3.8l-1.9 2z" fill="#6d9c7b"/><rect x="98.50" y="10.70" width="4.50" height="1" fill="#e8f1ea"/><path d="M98.50 12.60h4.4l-2.2 2.4z" fill="#e8f1ea"/><rect x="967.6" y="7.2" width="10.2" height="7" fill="none" stroke="#e8f1ea" stroke-width="1.1"/><path d="M970 11.8L972.7 9.2L975.4 11.8Z" fill="#e8f1ea"/><rect x="972" y="11.2" width="1.4" height="2.6" fill="#e8f1ea"/><rect x="1000.00" y="10.10" width="8.00" height="1" fill="#e8f1ea"/><rect x="1029.8" y="8.2" width="6.2" height="6" fill="none" stroke="#e8f1ea" stroke-width="1"/><path d="M1031.8 8.2V6.3h6.3v6.1h-2" fill="none" stroke="#e8f1ea" stroke-width="1"/><path d="M1060.6 6.2L1068.8 14.4M1068.8 6.2L1060.6 14.4" stroke="#e8f1ea" stroke-width="1.1"/><circle cx="1012" cy="36.8" r="2.8" fill="none" stroke="#e8f1ea" stroke-width="1.1"/><path d="M1008 44.3c0-3.5 1.8-4.8 4-4.8c1.3 0 2.3 .4 3 1.2" fill="none" stroke="#e8f1ea" stroke-width="1.1"/><path d="M1016.2 40.2v4.4M1014 42.4h4.4" stroke="#e8f1ea" stroke-width="1.1"/><path d="M516.3 41.6c-.3-2-2.6-3.3-2.6-6.2a4.9 4.9 0 0 1 9.8 0c0 2.9-2.3 4.2-2.6 6.2z" fill="none" stroke="#e8f1ea" stroke-width="1.1"/><path d="M516.6 43.4h4M517.2 45h3" stroke="#e8f1ea" stroke-width="1"/><rect x="72.60" y="53.5" width="1" height="66.00" fill="#d6d6d6"/><rect x="236.90" y="53.5" width="1" height="66.00" fill="#d6d6d6"/><rect x="462.10" y="53.5" width="1" height="66.00" fill="#d6d6d6"/><rect x="575.80" y="53.5" width="1" height="66.00" fill="#d6d6d6"/><rect x="747.70" y="53.5" width="1" height="66.00" fill="#d6d6d6"/><rect x="871.30" y="53.5" width="1" height="66.00" fill="#d6d6d6"/><rect x="1013.50" y="53.5" width="1" height="66.00" fill="#d6d6d6"/><rect x="143.50" y="84.4" width="1" height="14.90" fill="#dcdcdc"/><rect x="175.10" y="84.4" width="1" height="14.90" fill="#dcdcdc"/><rect x="298.20" y="84.4" width="1" height="13.60" fill="#dcdcdc"/><rect x="339.50" y="57.8" width="1" height="42.90" fill="#dcdcdc"/><rect x="533.00" y="84" width="1" height="15.00" fill="#dcdcdc"/><path d="M65.7 114.5h5v5h-5z" fill="none" stroke="#9a9a9a" stroke-width=".8"/><path d="M67.2 116l3 3m0-2.2v2.2h-2.2" fill="none" stroke="#777" stroke-width=".8"/><path d="M229.0 114.5h5v5h-5z" fill="none" stroke="#9a9a9a" stroke-width=".8"/><path d="M230.5 116l3 3m0-2.2v2.2h-2.2" fill="none" stroke="#777" stroke-width=".8"/><path d="M455.0 114.5h5v5h-5z" fill="none" stroke="#9a9a9a" stroke-width=".8"/><path d="M456.5 116l3 3m0-2.2v2.2h-2.2" fill="none" stroke="#777" stroke-width=".8"/><path d="M568.3 114.5h5v5h-5z" fill="none" stroke="#9a9a9a" stroke-width=".8"/><path d="M569.8 116l3 3m0-2.2v2.2h-2.2" fill="none" stroke="#777" stroke-width=".8"/><path d="M21.50 99.80h3.6l-1.8 2z" fill="#555"/><path d="M60.20 78.60h3.6l-1.8 2z" fill="#555"/><path d="M148.80 67.00h3.6l-1.8 2z" fill="#555"/><path d="M188.90 67.00h3.6l-1.8 2z" fill="#555"/><path d="M135.20 90.70h3.6l-1.8 2z" fill="#555"/><path d="M166.80 90.30h3.6l-1.8 2z" fill="#555"/><path d="M198.40 90.30h3.6l-1.8 2z" fill="#555"/><path d="M225.20 90.30h3.6l-1.8 2z" fill="#555"/><path d="M320.00 66.40h3.6l-1.8 2z" fill="#555"/><path d="M449.90 90.70h3.6l-1.8 2z" fill="#555"/><path d="M562.60 67.00h3.6l-1.8 2z" fill="#555"/><path d="M489.60 90.50h3.6l-1.8 2z" fill="#555"/><path d="M635.70 100.80h3.6l-1.8 2z" fill="#555"/><path d="M693.20 100.80h3.6l-1.8 2z" fill="#555"/><path d="M730.70 100.80h3.6l-1.8 2z" fill="#555"/><path d="M770.20 99.30h3.6l-1.8 2z" fill="#555"/><path d="M806.20 99.30h3.6l-1.8 2z" fill="#555"/><path d="M844.60 99.30h3.6l-1.8 2z" fill="#555"/><path d="M898.90 60.00h3.6l-1.8 2z" fill="#555"/><path d="M896.60 78.40h3.6l-1.8 2z" fill="#555"/><path d="M896.60 96.40h3.6l-1.8 2z" fill="#555"/><path d="M939.20 100.80h3.6l-1.8 2z" fill="#555"/><path d="M1002.40 100.80h3.6l-1.8 2z" fill="#555"/><rect x="13.8" y="58.8" width="18" height="20" rx=".8" fill="#e9c887" stroke="#d8aa5a" stroke-width=".8"/><rect x="17.4" y="57.6" width="10.9" height="3.8" rx=".6" fill="#6c6c6c"/><rect x="20.8" y="56.2" width="4.2" height="2.2" rx="1" fill="#6c6c6c"/><path d="M24.6 66.1h7.4l3.6 3.6v9.8h-11z" fill="#fff" stroke="#a2a2a2" stroke-width=".8"/><path d="M32 66.1v3.6h3.6" fill="none" stroke="#a2a2a2" stroke-width=".8"/><path d="M44.2 56.2L50.6 63M51.6 56.2L45.2 63" stroke="#555" stroke-width="1.1"/><circle cx="44.8" cy="64.4" r="1.9" fill="none" stroke="#5d6f9c" stroke-width="1.1"/><circle cx="50.9" cy="64.4" r="1.9" fill="none" stroke="#5d6f9c" stroke-width="1.1"/><path d="M42.6 73.6h4.6l2 2v6.4h-6.6z" fill="#f7f7f7" stroke="#a5a5a5" stroke-width=".8"/><path d="M46.8 77h4.8l2 2v5.8h-6.8z" fill="#f7f7f7" stroke="#a5a5a5" stroke-width=".8"/><path d="M48.2 80h4M48.2 81.6h4M48.2 83.2h4M43.8 76.4h2.4M43.8 78h2.4" stroke="#b5b5b5" stroke-width=".6"/><path d="M44.2 98.6l3-3l3.6 3.6l-3 3z" fill="#e3bb6c"/><path d="M47.4 95.4l1.6 1.6l4-4l-1.6-1.6z" fill="#6a6a6a"/><path d="M202.4 71.2L205.3 64.2L208.3 71.2M203.6 68.8h3.4" fill="none" stroke="#555" stroke-width="1.1"/><path d="M207.5 63.6l1.3-1.4l1.3 1.4" fill="none" stroke="#555" stroke-width=".9"/><path d="M220.4 71.2L223 66.3L225.6 71.2M221.3 69.6h3.3" fill="none" stroke="#666" stroke-width="1"/><path d="M224.9 62.2l1.1 1.2l1.1-1.2" fill="none" stroke="#555" stroke-width=".9"/><rect x="148.8" y="86" width="11.6" height="11.4" fill="#fdfdfd" stroke="#c2c2c2" stroke-width="1"/><path d="M154.6 86.4v10.6M149.2 91.7h10.8" stroke="#d0d0d0" stroke-width="1" stroke-dasharray="1.2 .8"/><path d="M181.6 90.3l4-4.2l4.4 4.4l-4 4z" fill="#fff" stroke="#666" stroke-width=".9"/><path d="M185.6 86.1v-1.4" stroke="#666" stroke-width=".9"/><path d="M190.4 90.6c1 1 1.6 2.2 1.2 3.2" fill="none" stroke="#4b6da0" stroke-width="1.3"/><rect x="180.2" y="95" width="12.6" height="3.2" fill="#eeee5f"/><path d="M210.2 94.4L213.6 86.2L217 94.4M211.4 91.6h4.4" fill="none" stroke="#555" stroke-width="1.4"/><rect x="207.3" y="95" width="12.8" height="3.2" fill="#c53a30"/><rect x="248.00" y="61.65" width="10.20" height="1.1" fill="#a9a9a9"/><rect x="248.00" y="64.35" width="10.20" height="1.1" fill="#a9a9a9"/><rect x="248.00" y="66.55" width="10.20" height="1.1" fill="#a9a9a9"/><rect x="264.90" y="64.35" width="10.70" height="1.1" fill="#b3b3b3"/><rect x="264.90" y="66.55" width="10.70" height="1.1" fill="#b3b3b3"/><rect x="264.90" y="68.75" width="10.70" height="1.1" fill="#b3b3b3"/><rect x="282.50" y="66.65" width="10.30" height="1.1" fill="#9b9b9b"/><rect x="282.50" y="69.05" width="10.30" height="1.1" fill="#9b9b9b"/><rect x="282.50" y="71.45" width="10.30" height="1.1" fill="#9b9b9b"/><path d="M307.2 72.8L316 64M316 64h-3.4M316 64v3.4" fill="none" stroke="#555" stroke-width="1.1"/><text x="303.4" y="70.2" transform="rotate(-45 306 67)" font-family="Liberation Sans" font-size="6.6" font-weight="bold" fill="#666">ab</text><rect x="248.00" y="87.05" width="10.00" height="1.1" fill="#a9a9a9"/><rect x="265.00" y="87.05" width="10.50" height="1.1" fill="#a9a9a9"/><rect x="283.00" y="87.05" width="9.60" height="1.1" fill="#a9a9a9"/><rect x="248.00" y="89.25" width="7.00" height="1.1" fill="#a9a9a9"/><rect x="267.00" y="89.25" width="6.50" height="1.1" fill="#a9a9a9"/><rect x="286.00" y="89.25" width="6.60" height="1.1" fill="#a9a9a9"/><rect x="248.00" y="91.45" width="10.00" height="1.1" fill="#a9a9a9"/><rect x="265.00" y="91.45" width="10.50" height="1.1" fill="#a9a9a9"/><rect x="283.00" y="91.45" width="9.60" height="1.1" fill="#a9a9a9"/><rect x="248.00" y="93.65" width="7.00" height="1.1" fill="#a9a9a9"/><rect x="267.00" y="93.65" width="6.50" height="1.1" fill="#a9a9a9"/><rect x="286.00" y="93.65" width="6.60" height="1.1" fill="#a9a9a9"/><rect x="304.00" y="87.05" width="11.40" height="1.1" fill="#a9a9a9"/><rect x="304.00" y="94.65" width="11.40" height="1.1" fill="#a9a9a9"/><rect x="310.00" y="89.50" width="5.40" height="1" fill="#b0b0b0"/><rect x="310.00" y="92.10" width="5.40" height="1" fill="#b0b0b0"/><rect x="321.80" y="87.05" width="11.40" height="1.1" fill="#a9a9a9"/><rect x="321.80" y="94.65" width="11.40" height="1.1" fill="#a9a9a9"/><rect x="327.80" y="89.50" width="5.40" height="1" fill="#b0b0b0"/><rect x="327.80" y="92.10" width="5.40" height="1" fill="#b0b0b0"/><path d="M304.4 91.3l2.8-2.4v4.8z" fill="#4a78b0"/><rect x="306.5" y="90.6" width="3.2" height="1.4" fill="#4a78b0"/><path d="M327.2 91.3l-2.8-2.4v4.8z" fill="#4a78b0"/><rect x="321.8" y="90.6" width="3" height="1.4" fill="#4a78b0"/><text x="348" y="67.4" font-family="Liberation Sans" font-size="6" fill="#606060">ab</text><text x="348" y="72.8" font-family="Liberation Sans" font-size="6" fill="#606060">c</text><path d="M355.6 68.4v2.2a1.6 1.6 0 0 1-1.6 1.6h-2M352.8 70.8l-1.4 1.4l1.4 1.4" fill="none" stroke="#707070" stroke-width=".9"/><rect x="346.8" y="85.8" width="10" height="11.6" fill="#fafafa" stroke="#a9a9a9" stroke-width=".9"/><path d="M346.8 89.6h10M346.8 93.6h10M351.8 85.8v3.8M351.8 93.6v3.8" stroke="#b0b0b0" stroke-width=".8"/><path d="M348.3 91.6h7M349.6 90.5l-1.3 1.1l1.3 1.1M354 90.5l1.3 1.1l-1.3 1.1" fill="none" stroke="#666" stroke-width=".7"/><text x="474.6" y="96" font-family="Liberation Sans" font-size="12" fill="#555">$</text><text x="499.4" y="96.4" font-family="Liberation Sans" font-size="12.2" fill="#555">%</text><text x="516.8" y="94.6" font-family="Liberation Sans" font-size="7.6" fill="#999" letter-spacing="-.4">000</text><text x="543.6" y="91" font-family="Liberation Sans" font-size="6.4" fill="#777">0</text><text x="541.6" y="96.8" font-family="Liberation Sans" font-size="6.4" fill="#777">,00</text><path d="M539.6 88.8h3.8M541 87.3l-1.5 1.5l1.5 1.5" fill="none" stroke="#3d6ea8" stroke-width="1"/><text x="558.8" y="91" font-family="Liberation Sans" font-size="6.4" fill="#777">,00</text><text x="562.6" y="96.8" font-family="Liberation Sans" font-size="6.4" fill="#777">,0</text><path d="M556.6 94.6h4.2M559.4 93.1l1.5 1.5l-1.5 1.5" fill="none" stroke="#555" stroke-width="1"/><rect x="601.9" y="57.5" width="20.8" height="18.2" fill="#fff" stroke="#b9b9b9" stroke-width=".8"/><path d="M607.6 57.5v18.2M613.1 57.5v18.2M618 57.5v18.2M601.9 62h20.8M601.9 66.6h20.8M601.9 71.2h20.8" stroke="#cfcfcf" stroke-width=".7"/><rect x="607.7" y="57.5" width="5.4" height="4.5" fill="#c8704f"/><rect x="607.7" y="62" width="7" height="4.6" fill="#4a74a8"/><rect x="607.7" y="66.6" width="6" height="4.6" fill="#c8704f"/><rect x="607.7" y="71.2" width="5.4" height="4.5" fill="#4a74a8"/><rect x="612.8" y="70.6" width="12.4" height="8.8" fill="#fff" stroke="#b5b5b5" stroke-width=".8"/><path d="M616.4 74h5.2M616.4 76.2h5.2M620.3 72.2l-2.6 5.8" stroke="#444" stroke-width=".9"/><rect x="658.5" y="57.2" width="23.4" height="20" fill="#fff" stroke="#bdbdbd" stroke-width=".8"/><rect x="664.2" y="61.5" width="17.7" height="15.7" fill="#c9cfe2"/><path d="M664.2 57.2v20M670 57.2v20M676 57.2v20M658.5 61.5h23.4M658.5 65.5h23.4M658.5 69.5h23.4M658.5 73.5h23.4" stroke="#c8c8c8" stroke-width=".7"/><g transform="translate(0 0)"><path d="M682.6 61.8L684.4 63.6L677.8 71.6L675.4 69.4Z" fill="#6b6b6b"/><path d="M675.4 69.4L677.8 71.6L676.6 73.4L673.8 71Z" fill="#fff" stroke="#9a9a9a" stroke-width=".5"/><path d="M673.8 71L676.6 73.4C675.8 76.8 671.4 79.8 664.6 80.6C666.8 76.6 669.8 72.2 673.8 71Z" fill="#4d6e99"/></g><rect x="709.3" y="56.3" width="22.6" height="19.4" fill="#fff" stroke="#bdbdbd" stroke-width=".8"/><rect x="715.4" y="61" width="10.4" height="9" fill="#cdcde5"/><path d="M715.4 56.3v19.4M725.8 56.3v19.4M709.3 61h22.6M709.3 70h22.6" stroke="#c8c8c8" stroke-width=".7"/><g transform="translate(50.6 0.4)"><path d="M682.6 61.8L684.4 63.6L677.8 71.6L675.4 69.4Z" fill="#6b6b6b"/><path d="M675.4 69.4L677.8 71.6L676.6 73.4L673.8 71Z" fill="#fff" stroke="#9a9a9a" stroke-width=".5"/><path d="M673.8 71L676.6 73.4C675.8 76.8 671.4 79.8 664.6 80.6C666.8 76.6 669.8 72.2 673.8 71Z" fill="#4d6e99"/></g><rect x="761.4" y="56.5" width="12.6" height="4.4" fill="#fff" stroke="#b0b0b0" stroke-width=".8"/><path d="M767.70 56.5v4.4" stroke="#b0b0b0" stroke-width=".7"/><rect x="770.2" y="62.8" width="11.6" height="4.8" fill="#c6cadf" stroke="#9a9a9a" stroke-width=".8"/><path d="M776.00 62.8v4.8" stroke="#9a9a9a" stroke-width=".7"/><rect x="761.4" y="69.6" width="12.6" height="9.2" fill="#fff" stroke="#b0b0b0" stroke-width=".8"/><path d="M767.70 69.6v9.2" stroke="#b0b0b0" stroke-width=".7"/><path d="M761.4 74.20h12.6" stroke="#b0b0b0" stroke-width=".7"/><path d="M760.6 65.2h7.4M763.6 62l-3 3.2l3 3.2" fill="none" stroke="#4a6f9a" stroke-width="1.6"/><rect x="797" y="56.5" width="12.6" height="4.4" fill="#fff" stroke="#b0b0b0" stroke-width=".8"/><path d="M803.30 56.5v4.4" stroke="#b0b0b0" stroke-width=".7"/><rect x="801.2" y="62.8" width="7.8" height="4.8" fill="#c6cadf" stroke="#9a9a9a" stroke-width=".8"/><rect x="797" y="69.6" width="12.6" height="9.2" fill="#fff" stroke="#b0b0b0" stroke-width=".8"/><path d="M803.30 69.6v9.2" stroke="#b0b0b0" stroke-width=".7"/><path d="M797 74.20h12.6" stroke="#b0b0b0" stroke-width=".7"/><path d="M809.4 61.6L819.8 70.8M819.8 61.6L809.4 70.8" stroke="#c0504d" stroke-width="1.4"/><path d="M837 57.4h14M839 55.8l-2 1.6l2 1.6M849 55.8l2 1.6l-2 1.6" fill="none" stroke="#4a6f9a" stroke-width="1.2"/><path d="M835.6 55v4.6M852.4 55v4.6" stroke="#9a9a9a" stroke-width=".7"/><path d="M835.6 61.4h20.4v15.4l-2 2h-4.2l-1.2-1.2l-1.2 1.2h-11.8z" fill="#fff" stroke="#b0b0b0" stroke-width=".8"/><path d="M841 61.4v17.4M847 61.4v17.4M852 61.4v15.4M835.6 64.2h20.4M835.6 71.6h20.4M835.6 75h20.4" stroke="#c4c4c4" stroke-width=".7"/><rect x="841" y="64.2" width="6" height="7.4" fill="#3d67a3"/><path d="M891.4 58.2V56.6H882.4L887.2 61.4L882.4 66H891.6V64.4" fill="none" stroke="#555" stroke-width="1.3"/><rect x="881.3" y="74" width="11" height="10.4" fill="#fff" stroke="#9a9a9a" stroke-width=".8"/><rect x="881" y="73.6" width="11.6" height="1.6" fill="#555"/><path d="M886.8 76.4v5.4M884.4 79.4l2.4 2.6l2.4-2.6" fill="none" stroke="#3c6db0" stroke-width="1.2"/><path d="M882.8 99.4l5.6-5.8l3 3l-5.6 5.8z" fill="#e27f9d"/><path d="M917.3 65.2L921 57.6L924.8 65.2M918.6 62.6h5" fill="none" stroke="#5b6fc0" stroke-width="1.4"/><path d="M918 68.8h6.6L918 76.4h6.8" fill="none" stroke="#8b5cb7" stroke-width="1.4"/><path d="M926.8 62.8h12.4l-4.6 5.4v6.2h-3.2v-6.2z" fill="#6e6e6e"/><circle cx="982.1" cy="64.2" r="6.6" fill="none" stroke="#3f6dad" stroke-width="1.8"/><path d="M977.3 69L970 76.4" stroke="#3f6dad" stroke-width="2"/><path d="M10.3 168.4L20 158.7V168.4z" fill="#c2c2c2"/><path d="M1065.8 119.6l4-3.6l4 3.6" fill="none" stroke="#555" stroke-width="1"/><path d="M76.3 141.4l-2.2-2.3h4.4z" fill="#666"/><rect x="95.2" y="137.5" width="1" height="1.2" fill="#999"/><rect x="95.2" y="140.5" width="1" height="1.2" fill="#999"/><rect x="95.2" y="143.5" width="1" height="1.2" fill="#999"/><path d="M118 136.3l8.4 8.4M126.4 136.3l-8.4 8.4" stroke="#a9a9a9" stroke-width="1"/><path d="M146.2 140.8l3 3.2l6.4-7.4" fill="none" stroke="#a9a9a9" stroke-width="1.2"/><text x="174" y="144.6" font-family="Liberation Serif" font-style="italic" font-size="12.5" fill="#666">fx</text><path d="M1066.6 138l3.4 3.6l3.4-3.6" fill="none" stroke="#666" stroke-width="1.1"/><path d="M20.80 185.40h5.2l-5.2 4.4z" fill="#3f7a3c"/><path d="M298.55 185.40h5.2l-5.2 4.4z" fill="#3f7a3c"/><path d="M741.55 185.40h5.2l-5.2 4.4z" fill="#3f7a3c"/><path d="M20.80 200.90h5.2l-5.2 4.4z" fill="#3f7a3c"/><path d="M298.55 200.90h5.2l-5.2 4.4z" fill="#3f7a3c"/><path d="M741.55 200.90h5.2l-5.2 4.4z" fill="#3f7a3c"/><path d="M20.80 215.90h5.2l-5.2 4.4z" fill="#3f7a3c"/><path d="M298.55 215.90h5.2l-5.2 4.4z" fill="#3f7a3c"/><path d="M741.55 215.90h5.2l-5.2 4.4z" fill="#3f7a3c"/><path d="M20.80 230.90h5.2l-5.2 4.4z" fill="#3f7a3c"/><path d="M298.55 230.90h5.2l-5.2 4.4z" fill="#3f7a3c"/><path d="M741.55 230.90h5.2l-5.2 4.4z" fill="#3f7a3c"/><path d="M20.80 245.90h5.2l-5.2 4.4z" fill="#3f7a3c"/><path d="M298.55 245.90h5.2l-5.2 4.4z" fill="#3f7a3c"/><path d="M741.55 245.90h5.2l-5.2 4.4z" fill="#3f7a3c"/><path d="M868.30 185.40h5.2l-5.2 4.4z" fill="#3f7a3c"/><path d="M1032.05 185.40h5.2l-5.2 4.4z" fill="#3f7a3c"/><path d="M868.30 200.90h5.2l-5.2 4.4z" fill="#3f7a3c"/><path d="M1032.05 200.90h5.2l-5.2 4.4z" fill="#3f7a3c"/><path d="M868.30 215.90h5.2l-5.2 4.4z" fill="#3f7a3c"/><path d="M1032.05 215.90h5.2l-5.2 4.4z" fill="#3f7a3c"/><path d="M868.30 245.90h5.2l-5.2 4.4z" fill="#3f7a3c"/><path d="M1032.05 245.90h5.2l-5.2 4.4z" fill="#3f7a3c"/><path d="M1069.9 165.2l2.4-2.4l2.4 2.4z" fill="#666"/><path d="M1069.9 483.8l2.4 2.6l2.4-2.6z" fill="#555"/><path d="M17 497.2l-3.2 2.6l3.2 2.6z" fill="#c5c5c5"/><path d="M30.2 497.2l3.2 2.6l-3.2 2.6z" fill="#c5c5c5"/><circle cx="127.4" cy="499.6" r="5.8" fill="none" stroke="#777" stroke-width="1"/><path d="M124.3 499.6h6.2M127.4 496.5v6.2" stroke="#666" stroke-width="1.3"/><rect x="646.6" y="494.5" width="1.1" height="1.3" fill="#999"/><rect x="646.6" y="498.5" width="1.1" height="1.3" fill="#999"/><rect x="646.6" y="502.5" width="1.1" height="1.3" fill="#999"/><path d="M660.8 499.4l3-2.6v5.2z" fill="#555"/><path d="M1059.8 499.4l-3-2.6v5.2z" fill="#555"/><rect x="855.8" y="511.8" width="10.2" height="9.8" fill="none" stroke="#8a8a8a" stroke-width=".9"/><path d="M859.2 511.8v9.8M862.6 511.8v9.8M855.8 515h10.2M855.8 518.4h10.2" stroke="#8a8a8a" stroke-width=".8"/><rect x="887.4" y="511.8" width="10.6" height="9.8" fill="none" stroke="#9a9a9a" stroke-width=".9"/><rect x="889.8" y="513.6" width="5.8" height="6.2" fill="none" stroke="#9a9a9a" stroke-width=".8"/><path d="M890.8 515.6h3.6M890.8 517.6h3.6" stroke="#aaa" stroke-width=".6"/><rect x="919.2" y="511.8" width="10.6" height="9.8" fill="none" stroke="#9a9a9a" stroke-width=".9"/><path d="M924.5 511.8v5.4M919.2 517.2h10.6" stroke="#9a9a9a" stroke-width=".9"/><rect x="945.00" y="516.20" width="5.80" height="1" fill="#777"/><rect x="955.60" y="516.20" width="78.20" height="1" fill="#b5b5b5"/><rect x="993" y="512.2" width="3.8" height="9.6" fill="#5a5a5a"/><path d="M1038.2 516.7h5.8M1041.1 513.8v5.8" stroke="#777" stroke-width="1"/></svg>
</body></html>
